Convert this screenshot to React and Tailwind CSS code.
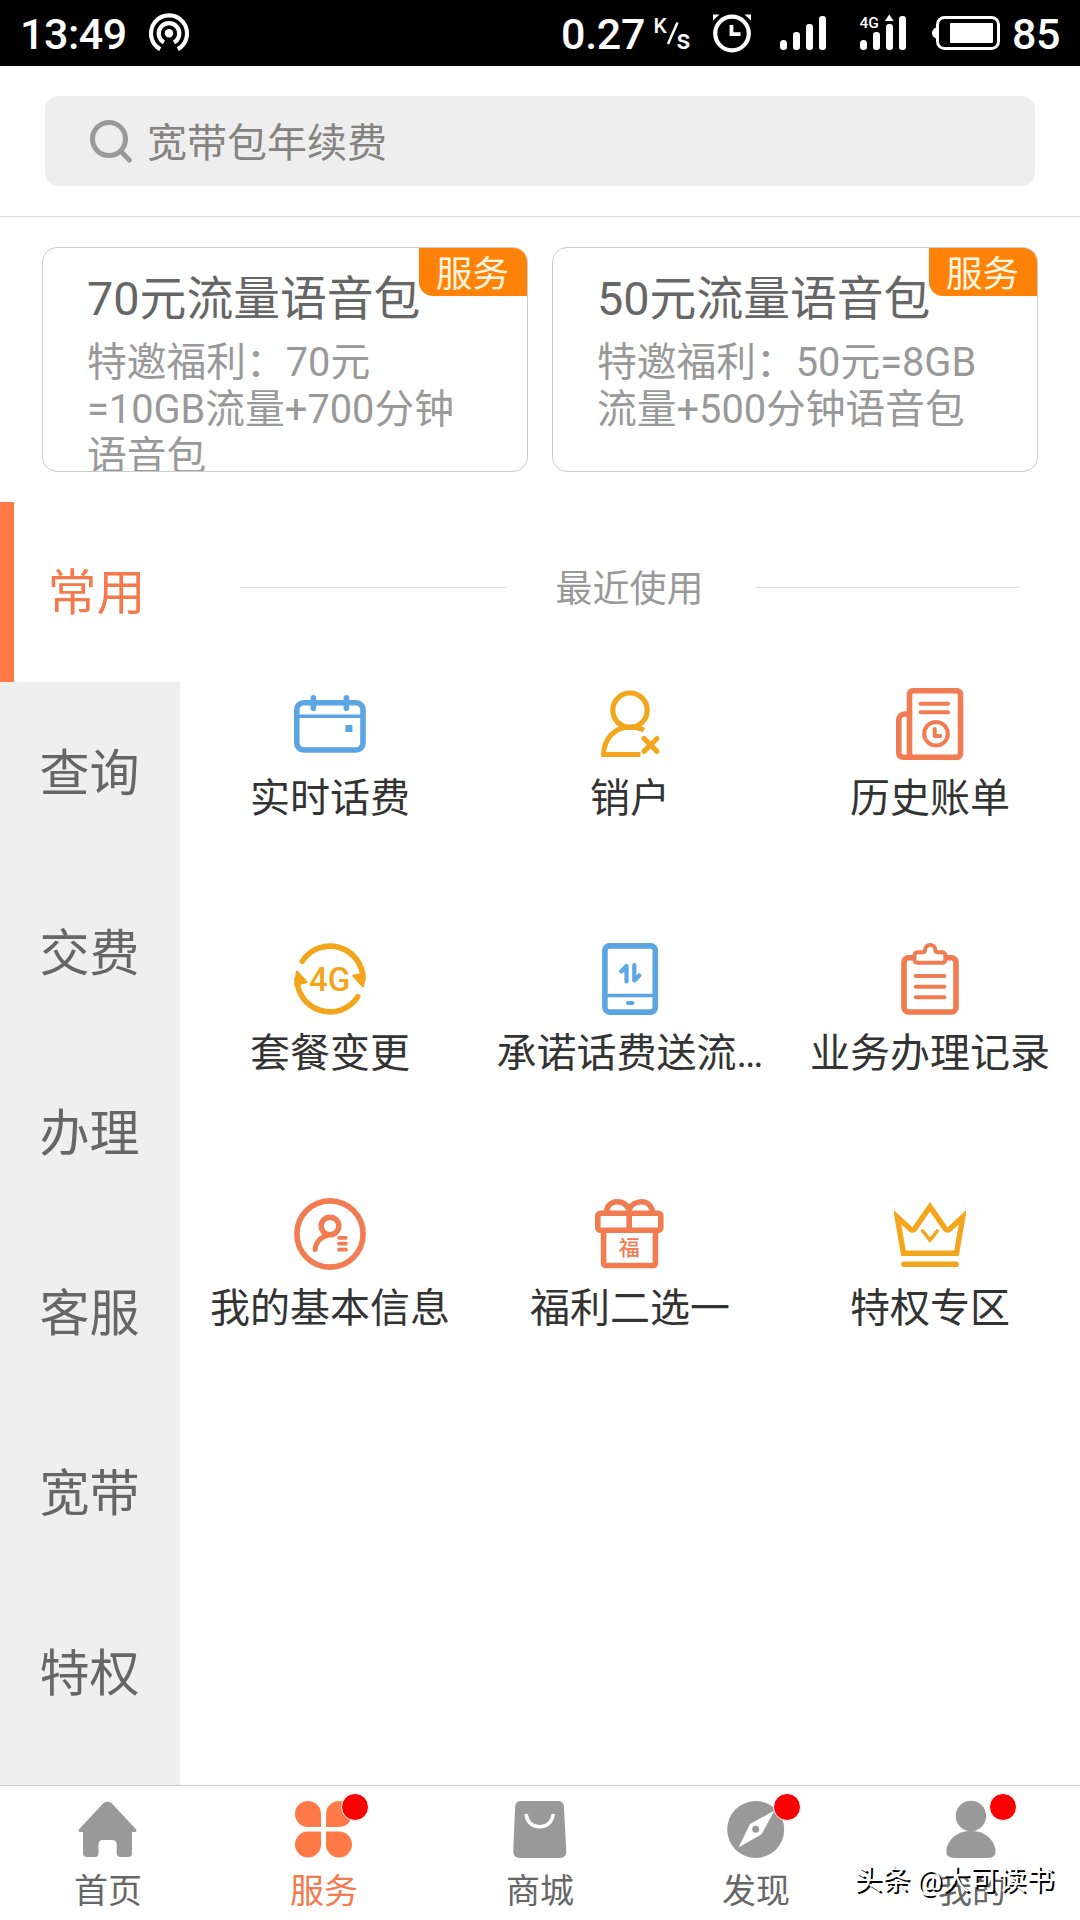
import { useState } from "react";

const cards = [
  {
    title: "70元流量语音包",
    desc: "特邀福利：70元\n=10GB流量+700分钟\n语音包",
  },
  {
    title: "50元流量语音包",
    desc: "特邀福利：50元=8GB\n流量+500分钟语音包",
  },
];

const menus = ["常用", "查询", "交费", "办理", "客服", "宽带", "特权"];

const BLUE = "#5ba5e3";
const YELLOW = "#f3a51b";
const ORANGE = "#f27c52";

function Icon({ color, children }) {
  return (
    <svg
      viewBox="0 0 72 72"
      className="h-[72px] w-[72px]"
      fill="none"
      stroke={color}
      strokeWidth="5.6"
      strokeLinecap="round"
      strokeLinejoin="round"
    >
      {children}
    </svg>
  );
}

const services = [
  {
    name: "实时话费",
    icon: (
      <Icon color={BLUE}>
        <rect x="2.8" y="14.8" width="66.2" height="47.2" rx="7" />
        <path d="M19.4 9.8v10.4M52.4 9.8v10.4" />
        <path d="M4 28.2h64" strokeWidth="3.6" />
        <rect x="51.4" y="37" width="7" height="7" fill={BLUE} stroke="none" />
      </Icon>
    ),
  },
  {
    name: "销户",
    icon: (
      <Icon color={YELLOW}>
        <circle cx="36" cy="22.2" r="17.2" strokeWidth="5.2" />
        <path
          d="M50 42.2C45.5 39.6 41 38.9 36 38.9C20.5 38.9 10.200 50.500 9.500 66.500H46.500"
          strokeWidth="5"
          strokeLinecap="butt"
        />
        <path d="M50 50.500l13 12.800M63 50.500L50 63.300" strokeWidth="5.2" />
      </Icon>
    ),
  },
  {
    name: "历史账单",
    icon: (
      <Icon color={ORANGE}>
        <rect x="15.500" y="2.800" width="51" height="66.400" rx="3.500" />
        <path d="M15.500 26h-4.500a6.200 6.200 0 0 0-6.200 6.200v32.800a4.200 4.200 0 0 0 4.200 4.200h9" />
        <path d="M26.500 15.700h27.500M26.500 24.300h27.500" strokeWidth="4" />
        <circle cx="42" cy="45.700" r="11.800" strokeWidth="4" />
        <path d="M40.700 41v7h5.500" strokeWidth="4" />
      </Icon>
    ),
  },
  {
    name: "套餐变更",
    icon: (
      <Icon color={YELLOW}>
        <path d="M8.300 18.200A33 33 0 0 1 69 36" />
        <path d="M63.700 53.800A33 33 0 0 1 3 36" />
        <path
          d="M59.500 33L70.500 30.500L69 43.200Z M12.500 39L1.500 41.500L3 28.800Z"
          fill={YELLOW}
          strokeWidth="2.500"
        />
        <text
          x="35.500"
          y="48"
          textAnchor="middle"
          fill={YELLOW}
          stroke="none"
          className="font-['Roboto'] text-[33px] font-medium"
        >
          4G
        </text>
      </Icon>
    ),
  },
  {
    name: "承诺话费送流…",
    icon: (
      <Icon color={BLUE}>
        <rect x="10.900" y="2.900" width="50.400" height="66.200" rx="4.500" />
        <path d="M12 52.600h48" strokeWidth="3.500" />
        <path d="M34 60.100h4.500" strokeWidth="4" />
        <path d="M27.200 28.500l5.300-5.500v15.500M40.300 22v15.500l5-5" strokeWidth="4.200" />
      </Icon>
    ),
  },
  {
    name: "业务办理记录",
    icon: (
      <Icon color={ORANGE}>
        <rect x="10" y="14.700" width="52" height="54.300" rx="4.500" />
        <path
          d="M24.500 9.200h4.300q2 0 2.200-2a5.200 5.200 0 0 1 10.400 0q.2 2 2.200 2h4.700a3 3 0 0 1 3 3v4.800a2.800 2.800 0 0 1-2.800 2.800h-25.200a2.800 2.800 0 0 1-2.800-2.800v-4.800a3 3 0 0 1 3-3z"
          fill="#fff"
          strokeWidth="4"
        />
        <path d="M21.800 33h28.600M21.800 43.700h28.600M21.800 54.300h28.600" strokeWidth="4" />
      </Icon>
    ),
  },
  {
    name: "我的基本信息",
    icon: (
      <Icon color={ORANGE}>
        <circle cx="36" cy="36" r="33.100" />
        <circle cx="36" cy="28" r="8.800" strokeWidth="5.400" />
        <path d="M33 37.500C26 39.500 21.500 45 21.200 51.500" strokeWidth="5" />
        <path d="M45 39.800h7M45 45.700h7M45 51.700h7" strokeWidth="3.700" />
      </Icon>
    ),
  },
  {
    name: "福利二选一",
    icon: (
      <Icon color={ORANGE}>
        <path d="M12.500 14C13 7.500 17.500 3.700 23 3.700C28.500 3.700 33 7 35 11.500C37 7 42 3.700 47.500 3.700C53 3.700 57.500 7.500 58.500 14" />
        <rect x="3.800" y="15.200" width="63" height="17" rx="2.500" />
        <path d="M35.200 11v21" />
        <path d="M9.600 33v32.500a2 2 0 0 0 2 2h47.800a2 2 0 0 0 2-2V33" />
        <text
          x="35.200"
          y="57.300"
          textAnchor="middle"
          fill={ORANGE}
          stroke="none"
          className="font-['Noto_Sans_CJK_SC'] text-[21px] font-medium"
        >
          福
        </text>
      </Icon>
    ),
  },
  {
    name: "特权专区",
    icon: (
      <Icon color={YELLOW}>
        <path
          d="M3.200 19L9.500 55.200H62.500L68.800 19L55.500 31.300Q53.200 33.300 51.200 30.600L36 8.800L20.800 30.600Q18.800 33.300 16.500 31.300Z"
          strokeWidth="5.400"
          strokeLinejoin="miter"
        />
        <path d="M28.700 33l7.300 9.200l7.300-9.200" strokeWidth="3.600" strokeLinejoin="miter" />
        <path d="M10 66.200h52" />
      </Icon>
    ),
  },
];

const tabs = [
  {
    name: "首页",
    icon: (
      <svg viewBox="0 0 60 60" className="h-[60px] w-[60px]" fill="#999">
        <path d="M25.300 3.300Q29.500-.2 33.700 3.300L58.200 29.500Q59 31.900 57 31.900H54V53Q54 57 50 57H42.500Q38.700 57 38.700 53V44.500Q38.700 40 34.200 40H25Q20.500 40 20.500 44.500V53Q20.500 57 16.700 57H9Q5 57 5 53V31.900H2Q0 31.900 .8 29.500Z" />
      </svg>
    ),
  },
  {
    name: "服务",
    badge: true,
    icon: (
      <svg viewBox="0 0 60 60" className="h-[60px] w-[60px]" fill="#ff7a47">
        <path d="M27 27H14A13 13 0 1 1 27 14Z" />
        <path d="M32 27V14A13 13 0 1 1 45 27Z" />
        <path d="M27 31.500V45A13 13 0 1 1 14 31.500Z" />
        <path d="M32 31.500H45A13 13 0 1 1 32 45Z" />
      </svg>
    ),
  },
  {
    name: "商城",
    icon: (
      <svg viewBox="0 0 60 60" className="h-[60px] w-[60px]" fill="#999">
        <path d="M11 1H48Q53.500 1 53.900 6.500L56.300 51.500Q56.300 58 50 58H9.500Q3.200 58 3.200 51.500L5.200 6.500Q5.600 1 11 1Z" />
        <path
          d="M16 14C17.500 22.500 22.500 26.800 29.700 26.800C37 26.800 41.800 22.500 43.400 14"
          fill="none"
          stroke="#fff"
          strokeWidth="3.500"
        />
      </svg>
    ),
  },
  {
    name: "发现",
    badge: true,
    icon: (
      <svg viewBox="0 0 60 60" className="h-[60px] w-[60px]" fill="#999">
        <circle cx="29.700" cy="29.500" r="28.500" />
        <path d="M48.500 10.500L35.600 34.300L12.500 47.500L24 24Z" fill="#fff" />
        <circle cx="29.700" cy="29.200" r="3.500" />
      </svg>
    ),
  },
  {
    name: "我的",
    badge: true,
    icon: (
      <svg viewBox="0 0 60 60" className="h-[60px] w-[60px]" fill="#999">
        <circle cx="28.900" cy="16" r="15.200" />
        <path d="M4.300 50C6 38.500 16 31 29 31C42 31 52 38.500 53.600 50Q54 58 46 58H12Q4 58 4.300 50Z" />
      </svg>
    ),
  },
];

function StatusBar() {
  return (
    <header className="flex h-[66px] items-center bg-black pr-[20px] pl-[20px] text-[43px] leading-[66px] font-medium text-white">
      <span className="w-[129px] pt-[1px] tracking-[-0.5px]">13:49</span>
      <svg viewBox="0 0 40 40" className="h-[40px] w-[40px]" fill="none" stroke="#fff" strokeWidth="4.200">
        <path d="M11.300 36.200A18 18 0 1 1 28.700 36.200" />
        <path d="M15 29.500A10.300 10.300 0 1 1 25 29.500" />
        <circle cx="20" cy="20.300" r="4.200" fill="#fff" stroke="none" />
      </svg>

      <span className="ml-auto pt-[1px] tracking-[-0.3px]">0.27</span>
      <svg viewBox="0 0 40 40" className="ml-[8px] h-[40px] w-[40px] overflow-visible" fill="#fff">
        <text x="0.500" y="19.500" className="font-['Roboto'] text-[21px] font-medium">K</text>
        <path d="M15 31L24.500 9.500" stroke="#fff" strokeWidth="2.500" />
        <text x="23.500" y="36" className="font-['Roboto'] text-[27px] font-medium">s</text>
      </svg>

      {/* alarm */}
      <svg viewBox="0 0 40 40" className="ml-[19px] h-[40px] w-[40px]" fill="none" stroke="#fff" strokeWidth="4.200">
        <circle cx="20" cy="20.500" r="16.800" />
        <path d="M19.500 12v9.200h9" strokeWidth="3.800" />
        <path d="M1 7.500V1.500H7.500Z M39 7.500V1.500H32.500Z" fill="#fff" stroke="none" />
      </svg>

      {/* signal */}
      <svg viewBox="0 0 46 40" className="ml-[28px] h-[40px] w-[46px]" fill="#fff">
        <rect x="0" y="27" width="7" height="10" rx="3.500" />
        <rect x="13" y="19" width="7" height="18" rx="3.200" />
        <rect x="26" y="11" width="7" height="26" rx="3.200" />
        <rect x="39" y="3" width="7" height="34" rx="3.200" />
      </svg>
      <svg viewBox="0 0 46 40" className="ml-[34px] h-[40px] w-[46px] overflow-visible" fill="#fff">
        <text x="-0.500" y="15" className="font-['Roboto'] text-[15.500px] font-medium">4G</text>
        <rect x="0" y="27" width="7" height="10" rx="3.500" />
        <rect x="13" y="19" width="7" height="18" rx="3.200" />
        <rect x="26" y="11" width="7" height="26" rx="3.200" />
        <path d="M29.200 1.500L33.700 8H24.800Z" />
        <rect x="39" y="3" width="7" height="34" rx="3.200" />
      </svg>

      {/* battery */}
      <svg viewBox="0 0 68 40" className="ml-[26px] h-[40px] w-[68px]" fill="#fff">
        <path d="M4 14.500Q0 16.500 0 20Q0 23.500 4 25.500Z" />
        <rect x="5.500" y="4.500" width="61" height="31" rx="7" fill="none" stroke="#fff" strokeWidth="3" />
        <rect x="18" y="10" width="43" height="20" rx="1" />
      </svg>
      <span className="ml-[12px] pt-[1px] tracking-[-0.5px]">85</span>
    </header>
  );
}

export default function App() {
  const [menu, setMenu] = useState("常用");
  const [tab, setTab] = useState("服务");

  return (
    <div className="relative flex h-[1920px] w-[1080px] flex-col overflow-hidden bg-white font-['Roboto','Noto_Sans_CJK_SC',sans-serif]">
      <StatusBar />

      {/* SEARCH */}
      <div className="h-[151px] border-b border-[#ddd] px-[45px] pt-[30px]">
        <div className="flex h-[90px] items-center rounded-[14px] bg-[#eee] pl-[44px] text-[#85837f]">
          <svg viewBox="0 0 44 44" className="h-[44px] w-[44px]" fill="none" stroke="#999" strokeWidth="5">
            <circle cx="20" cy="20" r="16.500" />
            <path d="M32 32.500l8.300 8.500" strokeLinecap="round" />
          </svg>
          <span className="ml-[14px] pt-[4px] text-[40px] leading-[47px]">宽带包年续费</span>
        </div>
      </div>

      {/* CARDS */}
      <div className="flex gap-[24px] px-[42px] pt-[30px] pb-[30px]">
        {cards.map((card) => (
          <div
            key={card.title}
            className="relative h-[225px] w-[486px] overflow-hidden rounded-[15px] border border-[#ccc] pt-[23px] pl-[44px]"
          >
            <span className="absolute top-0 right-0 h-[48px] w-[108px] rounded-bl-[14px] bg-[#ff8208] pr-[1px] text-center text-[36.500px] leading-[54px] text-[#fff6e0]">
              服务
            </span>
            <h3 className="text-[46.800px] leading-[56px] whitespace-nowrap text-[#666]">{card.title}</h3>
            <p className="mt-[12px] text-[39.750px] leading-[47px] whitespace-pre text-[#999]">{card.desc}</p>
          </div>
        ))}
      </div>

      <div className="flex h-[1283px]">
        {/* SIDE MENU */}
        <nav className="w-[180px] bg-[#efefef]">
          {menus.map((m) => (
            <button
              key={m}
              onClick={() => setMenu(m)}
              className={
                m === menu
                  ? "block h-[180px] w-full border-l-[14px] border-[#ff7a47] bg-white pt-[4px] pr-[1px] text-[49px] text-[#f37a4c]"
                  : "block h-[180px] w-full pt-[4px] pr-[1px] text-[50px] text-[#666]"
              }
            >
              {m}
            </button>
          ))}
        </nav>

        {/* SERVICES */}
        <main className="flex-1">
          <div className="flex h-[171px] items-center px-[60px] text-[37px] text-[#999]">
            <div className="h-px flex-1 bg-[#ddd]" />
            <h2 className="mr-[51px] ml-[50px] pt-[4px]">最近使用</h2>
            <div className="h-px flex-1 bg-[#ddd]" />
          </div>
          <div className="grid grid-cols-3">
            {services.map((s) => (
              <div key={s.name} className="flex h-[255px] flex-col items-center pt-[15px]">
                {s.icon}
                <span className="mt-[15px] text-[40px] leading-[47px] whitespace-nowrap text-[#333]">{s.name}</span>
              </div>
            ))}
          </div>
        </main>
      </div>

      {/* TAB BAR */}
      <footer className="grid h-[135px] grid-cols-5 border-t border-[#ccc]">
        {tabs.map((t) => (
          <button
            key={t.name}
            onClick={() => setTab(t.name)}
            className={
              t.name === tab
                ? "flex flex-col items-center pt-[14px] text-[#f37a4c]"
                : "flex flex-col items-center pt-[14px] text-[#666]"
            }
          >
            <span className="relative">
              {t.icon}
              {t.badge && (
                <span className="absolute -top-[7px] -right-[15px] h-[28px] w-[28px] rounded-full border-[1.500px] border-white bg-[#fb0000]" />
              )}
            </span>
            <span className="mt-[11px] text-[34px] leading-[40px]">{t.name}</span>
          </button>
        ))}
      </footer>

      {/* watermark */}
      <div className="absolute right-[26px] bottom-[21px] text-[28px] leading-[36px] whitespace-nowrap text-white [text-shadow:2px_2px_0_#000]">
        头条 @大可读书
      </div>
    </div>
  );
}
